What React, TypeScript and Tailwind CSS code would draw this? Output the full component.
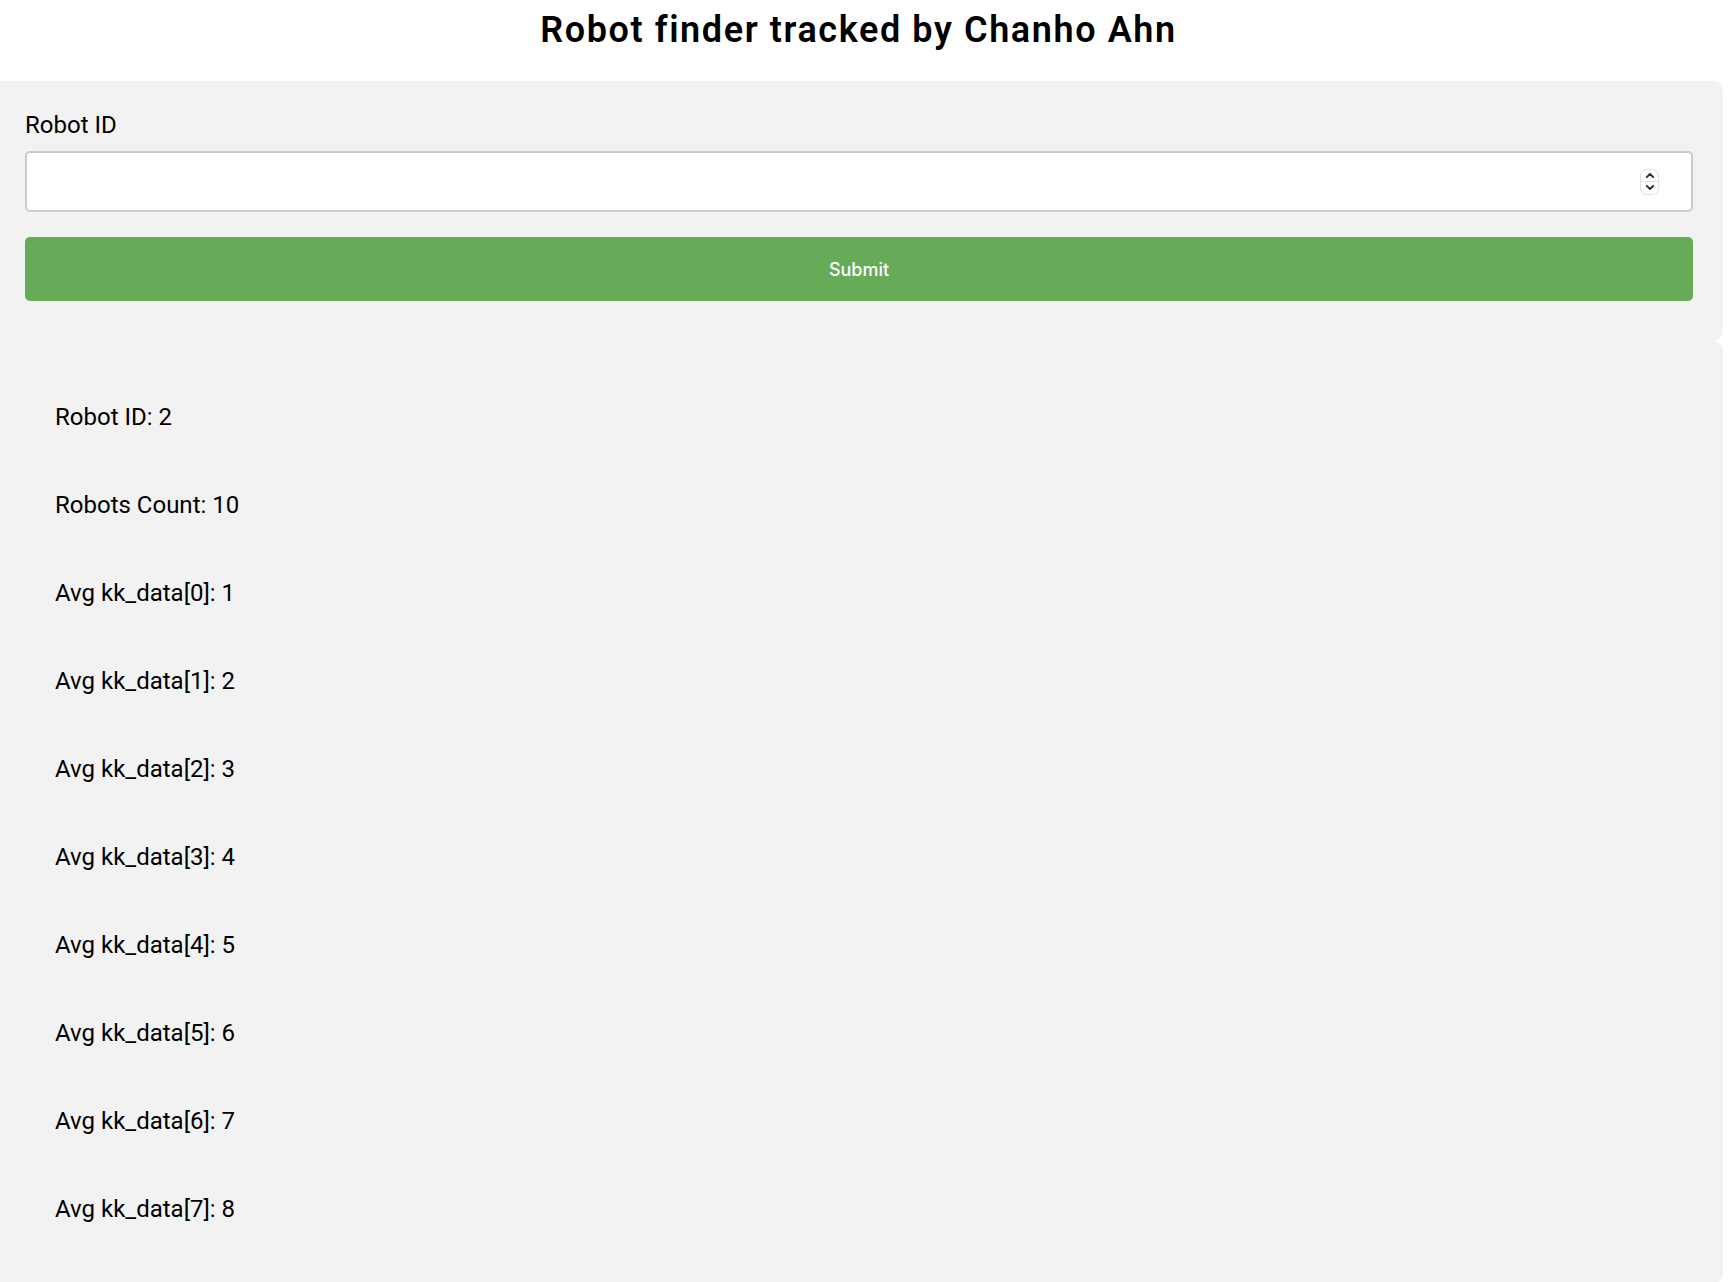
const rows = [
  "Robot ID: 2",
  "Robots Count: 10",
  "Avg kk_data[0]: 1",
  "Avg kk_data[1]: 2",
  "Avg kk_data[2]: 3",
  "Avg kk_data[3]: 4",
  "Avg kk_data[4]: 5",
  "Avg kk_data[5]: 6",
  "Avg kk_data[6]: 7",
  "Avg kk_data[7]: 8",
]

function Spinner() {
  return (
    <div className="absolute right-[34px] top-1/2 -translate-y-1/2 w-[19px] h-[26px] rounded-[7px] border border-[#e0e0e0] bg-white flex flex-col shadow-[0_0_1px_rgba(0,0,0,0.08)]">
      <div className="flex-1 flex items-center justify-center border-b border-[#e0e0e0]">
        <svg width="10" height="7" viewBox="0 0 10 7" fill="none">
          <path d="M1.8 5.2 L5 2 L8.2 5.2" stroke="#2b2b2b" strokeWidth="1.9" strokeLinecap="round" strokeLinejoin="round" />
        </svg>
      </div>
      <div className="flex-1 flex items-center justify-center">
        <svg width="10" height="7" viewBox="0 0 10 7" fill="none">
          <path d="M1.8 1.8 L5 5 L8.2 1.8" stroke="#2b2b2b" strokeWidth="1.9" strokeLinecap="round" strokeLinejoin="round" />
        </svg>
      </div>
    </div>
  )
}

export default function App() {
  return (
    <div className="min-h-screen bg-white text-black font-['Roboto',sans-serif]">
      <h1 className="h-[60px] pr-[11px] flex items-center justify-center text-[36px] font-semibold tracking-[1.6px]">
        Robot finder tracked by Chanho Ahn
      </h1>

      <form className="mt-[21px] mr-[5px] bg-[#f2f2f2] rounded-r-[10px] pt-[30px] pb-[40px] pl-[25px] pr-[30px]">
        <label className="block text-[24px] leading-[28px] mb-[12px]">Robot ID</label>
        <div className="relative">
          <input
            type="text"
            className="block w-full h-[61px] bg-white border-2 border-[#cbcbcb] rounded-[5px] px-3 text-[20px] outline-none"
          />
          <Spinner />
        </div>
        <button
          type="button"
          className="mt-[25px] w-full h-[64px] rounded-[5px] bg-[#66ab58] text-white text-[18px] font-medium font-['Inter',sans-serif]"
        >
          Submit
        </button>
      </form>

      <div className="mr-[5px] bg-[#f2f2f2] rounded-r-[10px] pt-[32px] pb-[31px] pl-[55px]">
        {rows.map((r) => (
          <div key={r} className="h-[88px] leading-[88px] text-[24px]">
            {r}
          </div>
        ))}
      </div>
    </div>
  )
}
